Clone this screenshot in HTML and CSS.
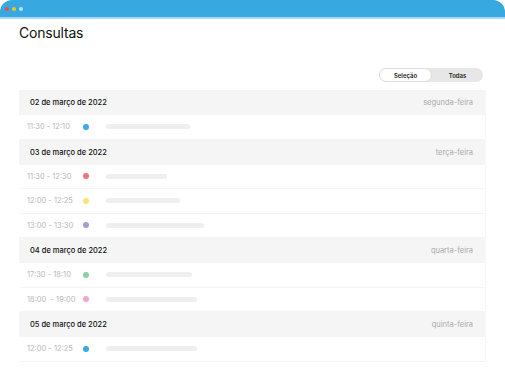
FILE: index.html
```html
<!DOCTYPE html>
<html lang="pt">
<head>
    <meta charset="UTF-8">
    <title>Consultas</title>
    <link rel="stylesheet" href="styles.css">
</head>
<body>
    <div class="window">
        <div class="titlebar">
            <span class="light red"></span>
            <span class="light yellow"></span>
            <span class="light blue"></span>
        </div>

        <div class="content">
            <h1>Consultas</h1>

            <div class="toolbar">
                <div class="toggle">
                    <span class="opt active">Seleção</span>
                    <span class="opt">Todas</span>
                </div>
            </div>

            <!-- list of days -->
            <div class="list">
                <div class="day">
                    <span>02 de março de 2022</span>
                    <span class="weekday">segunda-feira</span>
                </div>
                <div class="row">
                    <span class="time">11:30 - 12:10</span>
                    <span class="dot c-blue"></span>
                    <span class="bar" style="width: 84px"></span>
                </div>

                <div class="day">
                    <span>03 de março de 2022</span>
                    <span class="weekday">terça-feira</span>
                </div>
                <div class="row">
                    <span class="time">11:30 - 12:30</span>
                    <span class="dot c-red"></span>
                    <span class="bar" style="width: 61px"></span>
                </div>
                <div class="row">
                    <span class="time">12:00 - 12:25</span>
                    <span class="dot c-yellow"></span>
                    <span class="bar" style="width: 74px"></span>
                </div>
                <div class="row">
                    <span class="time">13:00 - 13:30</span>
                    <span class="dot c-purple"></span>
                    <span class="bar" style="width: 98px"></span>
                </div>

                <div class="day">
                    <span>04 de março de 2022</span>
                    <span class="weekday">quarta-feira</span>
                </div>
                <div class="row">
                    <span class="time">17:30 - 18:10</span>
                    <span class="dot c-green"></span>
                    <span class="bar" style="width: 86px"></span>
                </div>
                <div class="row">
                    <span class="time">18:00 &nbsp;- 19:00</span>
                    <span class="dot c-pink"></span>
                    <span class="bar" style="width: 91px"></span>
                </div>

                <div class="day">
                    <span>05 de março de 2022</span>
                    <span class="weekday">quinta-feira</span>
                </div>
                <div class="row">
                    <span class="time">12:00 - 12:25</span>
                    <span class="dot c-blue"></span>
                    <span class="bar" style="width: 91px"></span>
                </div>
            </div>
        </div>
    </div>
</body>
</html>
```

FILE: styles.css
```css
body {
    margin: 0;
    background: #fff;
    font-family: Inter, "Noto Sans", sans-serif;
    color: #111;
}
.window {
    width: 505px;
    height: 368px;
    overflow: hidden;
}
.titlebar {
    height: 17px;
    background: #38a8e0;
    border-bottom: 2px solid #a9d9f2;
    border-radius: 12px 12px 0 0;
    display: flex;
    align-items: center;
    gap: 3px;
    padding-left: 5px;
}
.light {
    width: 4px;
    height: 4px;
    border-radius: 50%;
}
.light.red { background: #ee4b4b; }
.light.yellow { background: #f6c02c; }
.light.blue { background: #b5e2f8; }

.content {
    padding: 0 19px;
}
h1 {
    margin: 5px 0 0;
    font-size: 14px;
    font-weight: 400;
    line-height: 17px;
    letter-spacing: -0.2px;
}
.toolbar {
    display: flex;
    justify-content: flex-end;
    margin-top: 27px;
    padding-right: 3px;
}
.toggle {
    display: flex;
    width: 104px;
    height: 14px;
    background: #e7e7e7;
    border-radius: 7px;
}
.opt {
    flex: 1;
    display: flex;
    align-items: center;
    justify-content: center;
    font-size: 6px;
    font-weight: 600;
    color: #222;
}
.opt.active {
    background: #fff;
    border: 1px solid #ddd;
    border-radius: 7px;
    box-sizing: border-box;
}

.list {
    margin-top: 8px;
    width: 467px;
    border-right: 1px solid #f7f7f7;
    box-sizing: border-box;
}
.day {
    height: 25px;
    background: #f5f5f5;
    display: flex;
    align-items: center;
    justify-content: space-between;
    padding: 0 12px 0 11px;
    font-size: 7.5px;
    font-weight: 500;
    color: #111;
}
.weekday {
    color: #aaa;
    font-weight: 400;
}
.row {
    height: 24.5px;
    box-sizing: border-box;
    border-bottom: 1px solid #f4f4f4;
    display: flex;
    align-items: center;
    padding-left: 8px;
}
.time {
    width: 56px;
    font-size: 7.5px;
    color: #b8b8b8;
}
.dot {
    width: 6px;
    height: 6px;
    border-radius: 50%;
    margin-right: 17px;
}
.bar {
    height: 5px;
    border-radius: 3px;
    background: #efefef;
}
.c-blue { background: #3aa9e8; }
.c-red { background: #ef7676; }
.c-yellow { background: #fde378; }
.c-purple { background: #a79bd3; }
.c-green { background: #8dcfa4; }
.c-pink { background: #f3a5cf; }
```
